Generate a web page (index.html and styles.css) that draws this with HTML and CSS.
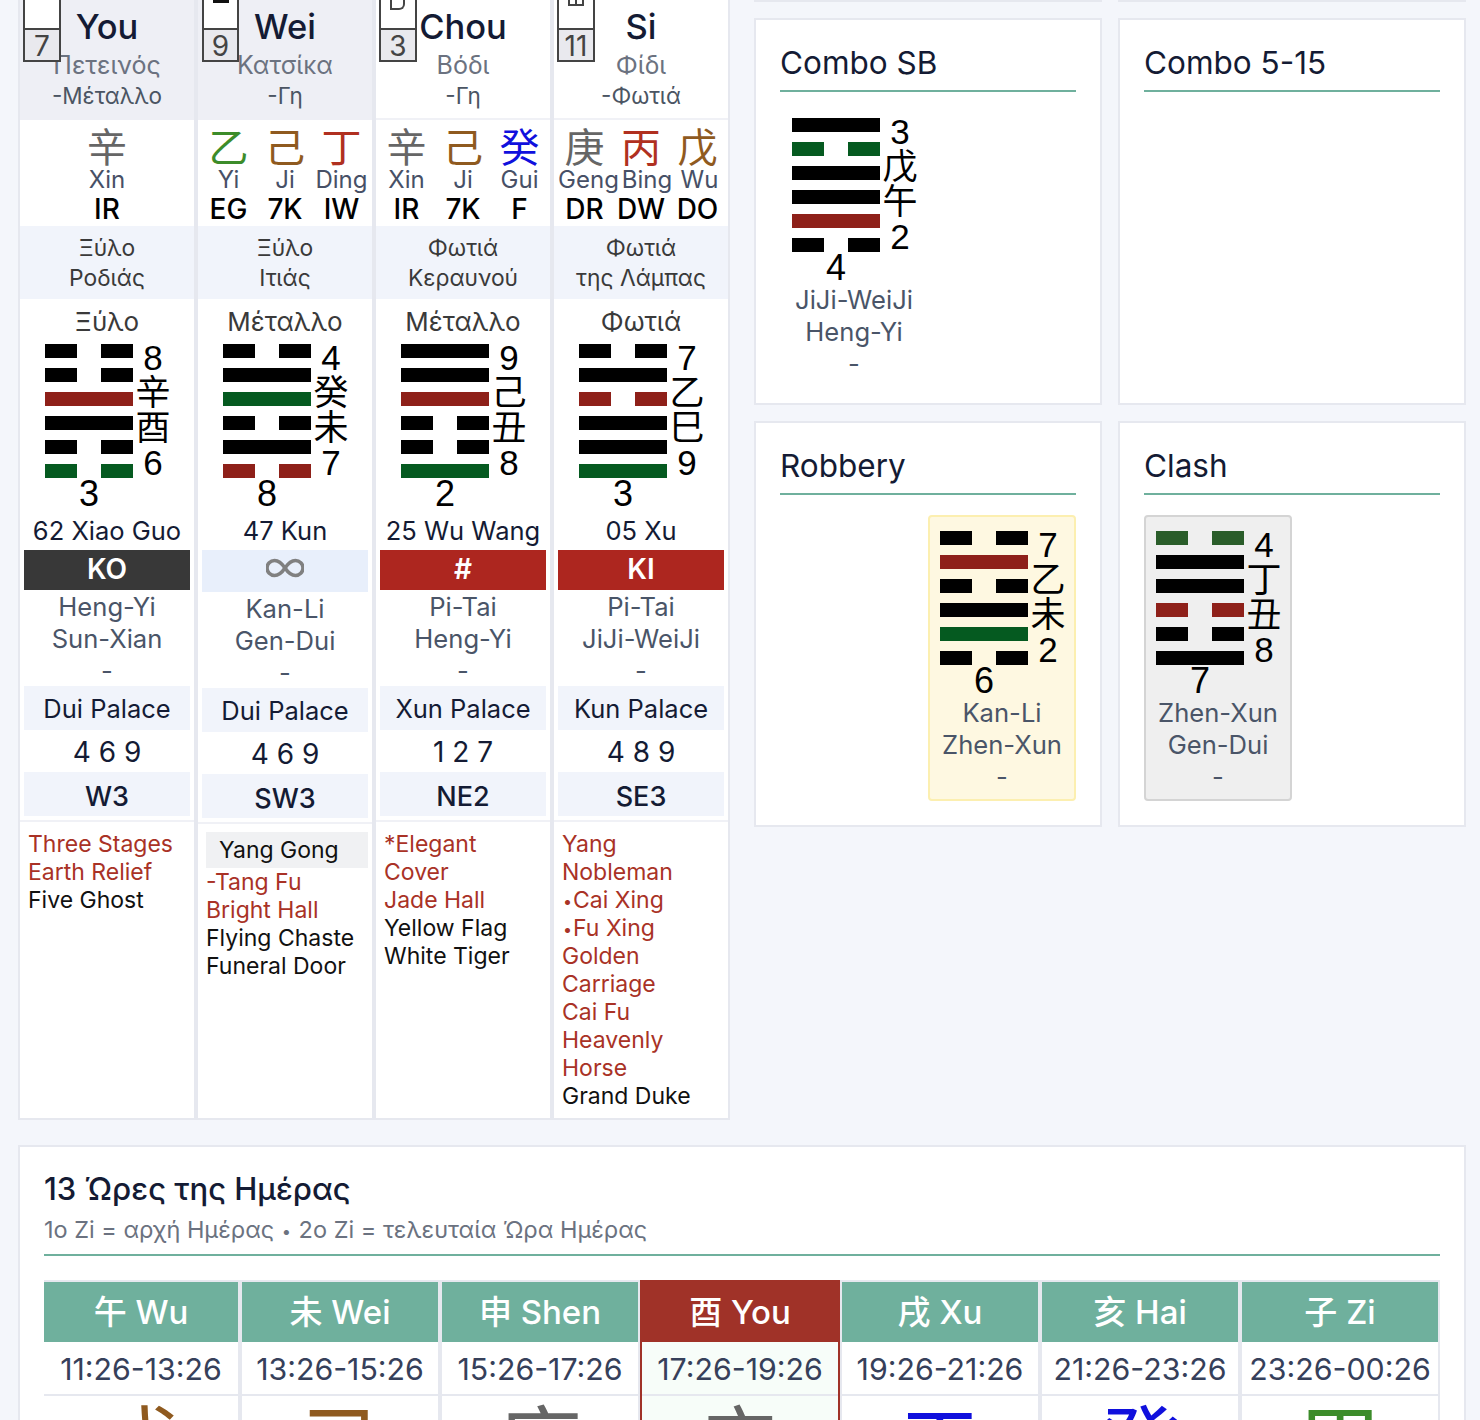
FILE: index.html
```html
<!DOCTYPE html>
<html lang="en">
<head>
    <meta charset="UTF-8">
    <meta name="viewport" content="width=device-width, initial-scale=1.0">
    <title>Hour Chart</title>
    <link rel="stylesheet" href="styles.css">
</head>
<body>
    <div class="layout">
        <!-- Four pillars -->
        <div class="pillars">
            <div class="pillar">
                <div class="head head-grey">
                    <div class="badge"><div class="badge-top"></div><div class="badge-num">7</div></div>
                    <div class="head-title">You</div>
                    <div class="head-sub">Πετεινός</div>
                    <div class="head-el">-Μέταλλο</div>
                </div>
                <div class="stems">
                    <div class="stem"><b class="metal">辛</b><span>Xin</span><em>IR</em></div>
                </div>
                <div class="star">Ξύλο<br>Ροδιάς</div>
                <div class="element">Ξύλο</div>
                <div class="hex">
                    <div class="bars">
                        <i class="broken"></i><i class="broken"></i><i class="red"></i><i></i><i class="broken"></i><i class="broken green"></i>
                    </div>
                    <div class="side"><span>8</span><span>辛</span><span>酉</span><span>6</span></div>
                    <div class="low">3</div>
                </div>
                <div class="gua">62 Xiao Guo</div>
                <div class="tag tag-dark">KO</div>
                <div class="pairs">Heng-Yi<br>Sun-Xian<br>-</div>
                <div class="palace">Dui Palace</div>
                <div class="nums">4 6 9</div>
                <div class="dir">W3</div>
                <div class="list">
                    <div class="r">Three Stages</div>
                    <div class="r">Earth Relief</div>
                    <div>Five Ghost</div>
                </div>
            </div>

            <div class="pillar">
                <div class="head head-grey">
                    <div class="badge badge-wide"><div class="badge-top"><span class="mark-dash"></span></div><div class="badge-num">9</div></div>
                    <div class="head-title">Wei</div>
                    <div class="head-sub">Κατσίκα</div>
                    <div class="head-el">-Γη</div>
                </div>
                <div class="stems">
                    <div class="stem"><b class="wood">乙</b><span>Yi</span><em>EG</em></div>
                    <div class="stem"><b class="earth">己</b><span>Ji</span><em>7K</em></div>
                    <div class="stem"><b class="fire">丁</b><span>Ding</span><em>IW</em></div>
                </div>
                <div class="star">Ξύλο<br>Ιτιάς</div>
                <div class="element">Μέταλλο</div>
                <div class="hex">
                    <div class="bars">
                        <i class="broken"></i><i></i><i class="green"></i><i class="broken"></i><i></i><i class="broken red"></i>
                    </div>
                    <div class="side"><span>4</span><span>癸</span><span>未</span><span>7</span></div>
                    <div class="low">8</div>
                </div>
                <div class="gua">47 Kun</div>
                <div class="tag tag-pale"><svg width="38" height="20" viewBox="0 0 38 20"><path d="M19 10C15 4 12 2.500 8.500 2.500a7.500 7.500 0 0 0 0 15C12 17.500 15 16 19 10s7-7.500 10.500-7.500a7.500 7.500 0 0 1 0 15C26 17.500 23 16 19 10z" fill="none" stroke="#808080" stroke-width="3.600"/></svg></div>
                <div class="pairs">Kan-Li<br>Gen-Dui<br>-</div>
                <div class="palace">Dui Palace</div>
                <div class="nums">4 6 9</div>
                <div class="dir">SW3</div>
                <div class="list">
                    <div class="list-box">Yang Gong</div>
                    <div class="r">-Tang Fu</div>
                    <div class="r">Bright Hall</div>
                    <div>Flying Chaste</div>
                    <div>Funeral Door</div>
                </div>
            </div>

            <div class="pillar">
                <div class="head">
                    <div class="badge"><div class="badge-top"><span class="mark-d"></span></div><div class="badge-num">3</div></div>
                    <div class="head-title">Chou</div>
                    <div class="head-sub">Βόδι</div>
                    <div class="head-el">-Γη</div>
                </div>
                <div class="stems">
                    <div class="stem"><b class="metal">辛</b><span>Xin</span><em>IR</em></div>
                    <div class="stem"><b class="earth">己</b><span>Ji</span><em>7K</em></div>
                    <div class="stem"><b class="water">癸</b><span>Gui</span><em>F</em></div>
                </div>
                <div class="star">Φωτιά<br>Κεραυνού</div>
                <div class="element">Μέταλλο</div>
                <div class="hex">
                    <div class="bars">
                        <i></i><i></i><i class="red"></i><i class="broken"></i><i class="broken"></i><i class="green"></i>
                    </div>
                    <div class="side"><span>9</span><span>己</span><span>丑</span><span>8</span></div>
                    <div class="low">2</div>
                </div>
                <div class="gua">25 Wu Wang</div>
                <div class="tag tag-red">#</div>
                <div class="pairs">Pi-Tai<br>Heng-Yi<br>-</div>
                <div class="palace">Xun Palace</div>
                <div class="nums">1 2 7</div>
                <div class="dir">NE2</div>
                <div class="list">
                    <div class="r">*Elegant</div>
                    <div class="r">Cover</div>
                    <div class="r">Jade Hall</div>
                    <div>Yellow Flag</div>
                    <div>White Tiger</div>
                </div>
            </div>

            <div class="pillar">
                <div class="head">
                    <div class="badge"><div class="badge-top"><span class="mark-e"></span></div><div class="badge-num">11</div></div>
                    <div class="head-title">Si</div>
                    <div class="head-sub">Φίδι</div>
                    <div class="head-el">-Φωτιά</div>
                </div>
                <div class="stems">
                    <div class="stem"><b class="metal">庚</b><span class="nudge-8">Geng</span><em>DR</em></div>
                    <div class="stem"><b class="fire">丙</b><span class="nudge-12">Bing</span><em>DW</em></div>
                    <div class="stem"><b class="earth">戊</b><span class="nudge-4">Wu</span><em>DO</em></div>
                </div>
                <div class="star">Φωτιά<br>της Λάμπας</div>
                <div class="element">Φωτιά</div>
                <div class="hex">
                    <div class="bars">
                        <i class="broken"></i><i></i><i class="broken red"></i><i></i><i></i><i class="green"></i>
                    </div>
                    <div class="side"><span>7</span><span>乙</span><span>巳</span><span>9</span></div>
                    <div class="low">3</div>
                </div>
                <div class="gua">05 Xu</div>
                <div class="tag tag-red">KI</div>
                <div class="pairs">Pi-Tai<br>JiJi-WeiJi<br>-</div>
                <div class="palace">Kun Palace</div>
                <div class="nums">4 8 9</div>
                <div class="dir">SE3</div>
                <div class="list">
                    <div class="r">Yang</div>
                    <div class="r">Nobleman</div>
                    <div class="r"><span class="dot">•</span>Cai Xing</div>
                    <div class="r"><span class="dot">•</span>Fu Xing</div>
                    <div class="r">Golden</div>
                    <div class="r">Carriage</div>
                    <div class="r">Cai Fu</div>
                    <div class="r">Heavenly</div>
                    <div class="r">Horse</div>
                    <div>Grand Duke</div>
                </div>
            </div>
        </div>

        <!-- Side cards -->
        <div class="cards">
            <div class="stub"></div>
            <div class="stub"></div>

            <div class="card">
                <h3>Combo SB</h3>
                <div class="slots">
                    <div class="slot slot-plain">
                        <div class="hex">
                            <div class="bars">
                                <i></i><i class="broken green"></i><i></i><i></i><i class="red"></i><i class="broken"></i>
                            </div>
                            <div class="side"><span>3</span><span>戊</span><span>午</span><span>2</span></div>
                            <div class="low">4</div>
                        </div>
                        <div class="pairs">JiJi-WeiJi<br>Heng-Yi<br>-</div>
                    </div>
                </div>
            </div>

            <div class="card">
                <h3>Combo 5-15</h3>
            </div>

            <div class="card">
                <h3>Robbery</h3>
                <div class="slots">
                    <div></div>
                    <div class="slot slot-yellow">
                        <div class="hex">
                            <div class="bars">
                                <i class="broken"></i><i class="red"></i><i class="broken"></i><i></i><i class="green"></i><i class="broken"></i>
                            </div>
                            <div class="side"><span>7</span><span>乙</span><span>未</span><span>2</span></div>
                            <div class="low">6</div>
                        </div>
                        <div class="pairs">Kan-Li<br>Zhen-Xun<br>-</div>
                    </div>
                </div>
            </div>

            <div class="card">
                <h3>Clash</h3>
                <div class="slots">
                    <div class="slot slot-grey">
                        <div class="hex">
                            <div class="bars">
                                <i class="broken moss"></i><i></i><i></i><i class="broken red"></i><i class="broken"></i><i></i>
                            </div>
                            <div class="side"><span>4</span><span>丁</span><span>丑</span><span>8</span></div>
                            <div class="low">7</div>
                        </div>
                        <div class="pairs">Zhen-Xun<br>Gen-Dui<br>-</div>
                    </div>
                </div>
            </div>
        </div>
    </div>

    <!-- Hours of the day -->
    <div class="hours-card">
        <h2>13 Ώρες της Ημέρας</h2>
        <div class="hours-note">1ο Zi = αρχή Ημέρας <span class="dot">•</span> 2ο Zi = τελευταία Ώρα Ημέρας</div>
        <div class="hours">
            <div class="hour">
                <div class="hour-name">午 Wu</div>
                <div class="hour-time">11:26-13:26</div>
                <div class="hour-stem earth">戊</div>
            </div>
            <div class="hour">
                <div class="hour-name">未 Wei</div>
                <div class="hour-time">13:26-15:26</div>
                <div class="hour-stem earth">己</div>
            </div>
            <div class="hour">
                <div class="hour-name">申 Shen</div>
                <div class="hour-time">15:26-17:26</div>
                <div class="hour-stem metal">庚</div>
            </div>
            <div class="hour hour-now">
                <div class="hour-name">酉 You</div>
                <div class="hour-time">17:26-19:26</div>
                <div class="hour-stem metal">辛</div>
            </div>
            <div class="hour">
                <div class="hour-name">戌 Xu</div>
                <div class="hour-time">19:26-21:26</div>
                <div class="hour-stem water">壬</div>
            </div>
            <div class="hour">
                <div class="hour-name">亥 Hai</div>
                <div class="hour-time">21:26-23:26</div>
                <div class="hour-stem water">癸</div>
            </div>
            <div class="hour">
                <div class="hour-name">子 Zi</div>
                <div class="hour-time">23:26-00:26</div>
                <div class="hour-stem wood">甲</div>
            </div>
        </div>
    </div>
</body>
</html>
```

FILE: styles.css
```css
html, body {
    height: 1420px;
    overflow: hidden;
}
body {
    margin: 0;
    padding: 0 14px 0 18px;
    background: #f4f6fb;
    color: #141b34;
    font-family: Inter, "Noto Sans CJK TC", sans-serif;
}
.layout {
    display: grid;
    grid-template-columns: 712px 712px;
    gap: 24px;
    align-items: start;
}
.dot {
    padding: 0 1px;
    font-size: 0.7em;
    line-height: 0;
    vertical-align: 1px;
}

/* Pillars */
.pillars {
    display: grid;
    grid-template-columns: repeat(4, 174px);
    gap: 4px;
    height: 1120px;
    box-sizing: border-box;
    padding: 0 2px 2px;
    background: #e6e8ef;
}
.pillar {
    display: flex;
    flex-direction: column;
    background: #fff;
    min-width: 0;
}
.head {
    position: relative;
    height: 120px;
    box-sizing: border-box;
    text-align: center;
    border-bottom: 2px solid #f0f1f6;
}
.head-grey {
    background: #eeeff5;
    border-bottom: 0;
}
.head-title {
    height: 48px;
    padding-top: 3px;
    line-height: 48px;
    font-size: 34.500px;
    font-weight: 500;
}
.head-sub {
    margin-top: -1px;
    line-height: 30px;
    font-size: 25px;
    color: #6b7280;
}
.head-el {
    line-height: 32px;
    font-size: 22.500px;
    color: #4b5563;
}
.badge {
    position: absolute;
    left: 3px;
    top: 0;
    width: 34px;
    border: 2px solid #444;
    border-top: 0;
}
.badge-wide {
    left: 4px;
    width: 33px;
}
.badge-top {
    position: relative;
    height: 28px;
    background: #fff;
    border-bottom: 2px solid #444;
}
.badge-num {
    height: 30px;
    line-height: 32px;
    font-size: 28px;
    text-align: center;
    color: #444;
    background: #e9e9ee;
}
.mark-dash {
    position: absolute;
    left: 9px;
    top: 0;
    width: 16px;
    height: 3px;
    background: #111;
}
.mark-d {
    position: absolute;
    left: 9px;
    top: 0;
    width: 11px;
    height: 8px;
    border: 2px solid #444;
    border-top: 0;
    border-radius: 0 0 6px 0;
}
.mark-e {
    position: absolute;
    left: 9px;
    top: 0;
    width: 12px;
    height: 4px;
    border: 2px solid #444;
    border-top: 0;
}
.mark-e::after {
    content: "";
    position: absolute;
    left: 5px;
    top: 0;
    width: 2px;
    height: 4px;
    background: #444;
}
.stems {
    display: flex;
    justify-content: center;
    height: 106px;
}
.stem {
    width: 56.500px;
    display: flex;
    flex-direction: column;
    align-items: center;
    white-space: nowrap;
}
.stem b {
    height: 46px;
    line-height: 56px;
    font-size: 40px;
    font-weight: 400;
}
.stem span {
    line-height: 28px;
    font-size: 24px;
    color: #475066;
}
.stem span.nudge-4 { margin-left: 4px; }
.stem span.nudge-8 { margin-left: 8px; }
.stem span.nudge-12 { margin-left: 12px; }
.stem em {
    line-height: 30px;
    font-size: 28px;
    font-style: normal;
    font-weight: 500;
    color: #000;
}
.metal { color: #666; }
.wood { color: #3c8c2a; }
.earth { color: #8f5a1f; }
.fire { color: #b03020; }
.water { color: #1010dd; }
.star {
    height: 73px;
    box-sizing: border-box;
    padding-top: 7px;
    line-height: 30px;
    font-size: 22.800px;
    text-align: center;
    color: #3a3a3a;
    background: #f1f4fb;
}
.element {
    height: 45px;
    line-height: 46px;
    font-size: 26px;
    text-align: center;
    color: #3a3a3a;
}

/* Hexagram */
.hex {
    position: relative;
    width: 124px;
    height: 168px;
    margin: 0 auto;
    color: #000;
}
.bars {
    width: 88px;
    display: flex;
    flex-direction: column;
    gap: 10.400px;
}
.bars i {
    display: block;
    height: 13.600px;
    color: #000;
    background: currentColor;
}
.bars .red { color: #8e2019; }
.bars .green { color: #055a20; }
.bars .moss { color: #2a5d2a; }
.bars .broken {
    background: linear-gradient(90deg, currentColor 32px, transparent 32px 56px, currentColor 56px);
}
.side {
    position: absolute;
    right: -2px;
    top: -4px;
    width: 36px;
    text-align: center;
    font-size: 35px;
    line-height: 35px;
    font-family: "Liberation Sans", "Noto Sans CJK TC", sans-serif;
}
.side span {
    display: block;
}
.low {
    position: absolute;
    left: 0;
    top: 132px;
    width: 88px;
    text-align: center;
    font-size: 36px;
    line-height: 36px;
    font-family: "Liberation Sans", sans-serif;
}
.gua {
    height: 38px;
    line-height: 38px;
    font-size: 25.500px;
    text-align: center;
}
.tag {
    height: 40px;
    margin: 0 4px;
    line-height: 39px;
    font-size: 28px;
    font-weight: 600;
    text-align: center;
    color: #fff;
}
.tag-dark { background: #383838; }
.tag-red { background: #ad261f; }
.tag-pale {
    height: 42px;
    background: #e8effb;
    display: flex;
    align-items: center;
    justify-content: center;
}
.tag-pale svg {
    margin-bottom: 6px;
}
.pairs {
    line-height: 32px;
    font-size: 25.600px;
    text-align: center;
    color: #4a5568;
}
.pillar .pairs {
    height: 96px;
    box-sizing: border-box;
    padding-top: 1px;
    white-space: nowrap;
}
.palace, .dir {
    height: 44px;
    margin: 0 4px;
    line-height: 46px;
    font-size: 25.500px;
    text-align: center;
    background: #f1f4fb;
}
.dir {
    line-height: 50px;
    font-size: 27px;
    font-weight: 500;
}
.nums {
    height: 42px;
    line-height: 44px;
    font-size: 28px;
    text-align: center;
}
.list {
    flex: 1;
    margin-top: 4px;
    padding: 8px 8px 0;
    border-top: 2px solid #f0f1f6;
    line-height: 28px;
    font-size: 23px;
    color: #111;
}
.list .r {
    color: #a93226;
}
.list-box {
    height: 36px;
    margin-right: -4px;
    padding-left: 13px;
    line-height: 36px;
    background: #f0f1f3;
}

/* Cards */
.cards {
    display: grid;
    grid-template-columns: 348px 348px;
    column-gap: 16px;
    row-gap: 16px;
}
.stub {
    height: 2px;
    background: #e6e8ef;
}
.card {
    box-sizing: border-box;
    height: 387px;
    padding: 24px;
    background: #fff;
    border: 2px solid #e6e8ef;
}
.card:nth-child(n+5) {
    height: 406px;
}
.card h3 {
    margin: 0 0 20px;
    padding-bottom: 6px;
    height: 40px;
    line-height: 38px;
    font-size: 31.500px;
    font-weight: 400;
    border-bottom: 2px solid #6fb09d;
}
.slots {
    display: grid;
    grid-template-columns: 148px 148px;
}
.slot {
    box-sizing: border-box;
    height: 286px;
    padding: 14px 10px 0;
    border: 2px solid transparent;
    border-radius: 4px;
}
.slot-plain {
    padding-top: 4px;
}
.slot .hex {
    height: 166px;
}
.slot .pairs {
    white-space: nowrap;
}
.slot-yellow {
    background: #fef8e1;
    border-color: #fcefb0;
}
.slot-grey {
    background: #efefef;
    border-color: #d4d4d4;
}

/* Hours */
.hours-card {
    box-sizing: border-box;
    width: 1448px;
    height: 400px;
    margin-top: 25px;
    padding: 25px 24px 24px;
    background: #fff;
    border: 2px solid #e6e8ef;
}
.hours-card h2 {
    margin: 0;
    height: 36px;
    line-height: 34px;
    font-size: 31px;
    font-weight: 500;
}
.hours-note {
    height: 46px;
    line-height: 44px;
    margin-bottom: 24px;
    font-size: 23.500px;
    color: #6b7280;
    border-bottom: 2px solid #6fb09d;
}
.hours {
    display: grid;
    grid-template-columns: 194px repeat(6, 196px);
    gap: 4px;
    padding: 2px 2px 0 0;
    background: #e6e8ef;
    height: 300px;
}
.hour {
    display: flex;
    flex-direction: column;
    gap: 2px;
    background: #e6e8ef;
    text-align: center;
}
.hour-name {
    height: 60px;
    line-height: 60px;
    font-size: 33px;
    font-weight: 500;
    color: #fff;
    background: #6fb09d;
}
.hour-time {
    height: 52px;
    margin-top: -2px;
    line-height: 54px;
    font-size: 30.300px;
    color: #36405a;
    background: #fff;
}
.hour-stem {
    flex: 1;
    line-height: 100px;
    font-size: 84px;
    background: #fff;
}
.hour-now {
    margin: -2px -2px 0;
    border: 2px solid #a03228;
    border-width: 2px 2px 0;
}
.hour-now .hour-name {
    background: #a03228;
}
.hour-now .hour-time, .hour-now .hour-stem {
    background: #f7fdf9;
}
```
